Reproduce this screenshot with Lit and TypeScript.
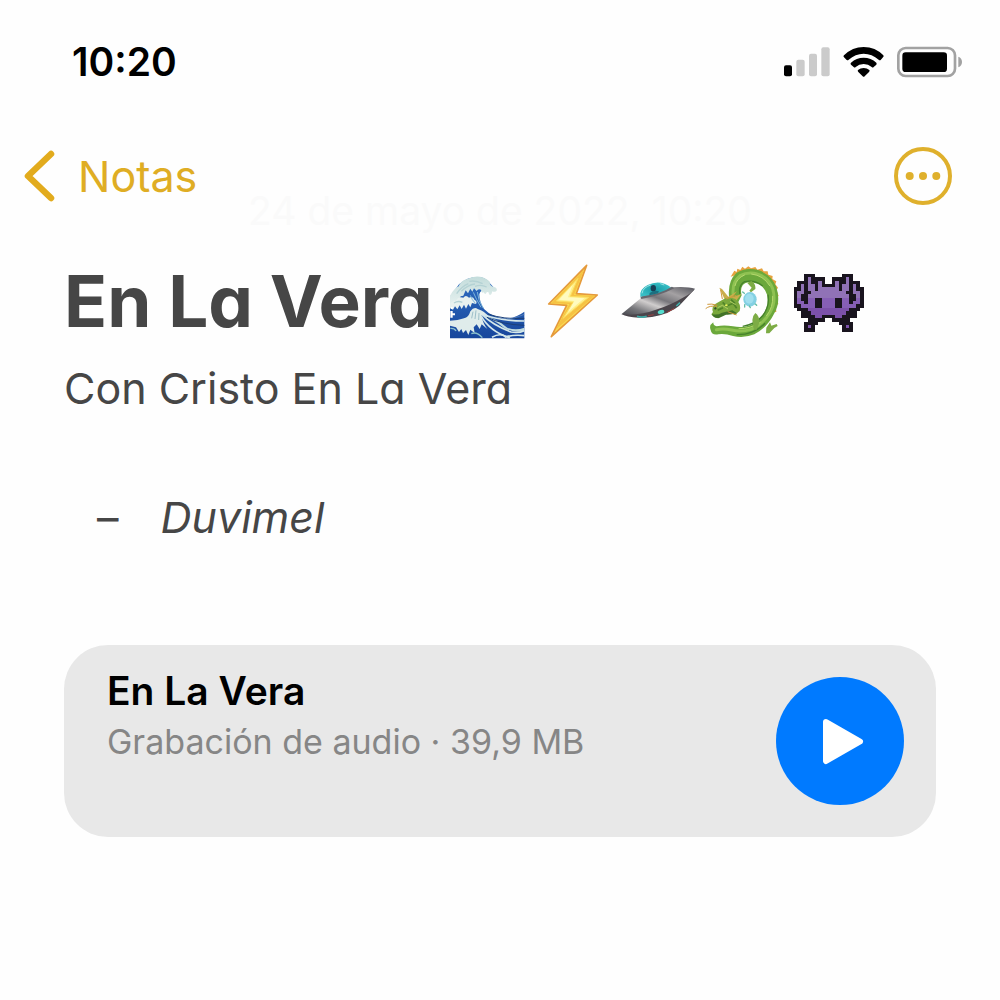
import { LitElement, html, svg, css } from "lit";
import { customElement } from "lit/decorators.js";

// Left half of the alien sprite; the right half mirrors it. k = outline, p = body, . = empty
const ALIEN_ROWS = [
  "...kkk....",
  "...kpkkkk.",
  ".kkkpkkpk.",
  ".kpkppkpkk",
  "kkpkppkppp",
  "kppkkppppp",
  "kpkkpppppp",
  "kpkkppkkpp",
  "kppkppkkpp",
  "kkppppkkpp",
  ".kkkpppppp",
  "..kkkppppp",
  "..kkkkppkk",
  "....kkkkk.",
  "...kkkk...",
  "...kpk....",
  "...kkk....",
];

@customElement("note-emoji")
class NoteEmoji extends LitElement {
  static properties = { kind: {} };
  declare kind: string;

  static styles = css`
    :host { display: block; flex: none; }
    svg { display: block; width: 76px; height: 80px; overflow: visible; }
  `;

  private wave() {
    return svg`
      <defs>
        <linearGradient id="sea" x1="0" y1="0" x2="0" y2="1">
          <stop offset="0" stop-color="#2f6ec2"/><stop offset="1" stop-color="#17469c"/>
        </linearGradient>
        <linearGradient id="foam" x1="0" y1="0" x2="0" y2="1">
          <stop offset="0" stop-color="#c3dcdb"/><stop offset="1" stop-color="#e6f1ef"/>
        </linearGradient>
      </defs>
      <path fill="url(#sea)" d="M33 125 L60 88 Q85 66 115 66 Q138 66 150 82 L165 98 L148 104 Q124 102 121 118 Q121 143 136 163 Q158 185 190 190 Q225 193 256 170 V250 H33Z"/>
      <path fill="url(#foam)" d="M33 122 Q46 99 59 94 Q66 77 82 73 Q103 62 123 65 Q143 69 153 81 Q150 92 165 96 Q176 99 173 107 Q166 113 160 109 Q157 124 150 118 Q150 108 143 112 Q139 122 134 112 Q127 116 126 104 Q117 100 113 108 L105 100 L100 110 L94 101 L87 115 L80 106 L73 122 L65 124 Q60 137 50 137 L33 151Z"/>
      <path fill="#e8f1ef" d="M33 148 Q40 136 52 135 Q58 123 73 128 Q80 118 90 128 Q102 122 107 135 Q116 140 111 147 L99 144 L94 157 L88 147 L81 161 L75 149 L68 162 L62 151 L55 163 L48 154 L42 164 L33 160Z"/>
      <path fill="none" stroke="#b4d2d4" stroke-width="4" d="M53 116 Q67 95 88 86 M67 109 Q85 90 108 87 M91 79 Q110 75 131 86 M108 94 Q126 87 143 96 M45 144 Q57 136 70 142"/>
      <path fill="none" stroke="#7eb7dc" stroke-width="3" d="M103 112 Q112 134 126 157 M115 111 Q117 137 133 160 M94 121 Q99 135 109 145"/>
      <path fill="#fff" d="M34 168 h7 v7 h7 v6 h-7 v7 h-7Z M36 156 h5 v6 h-5Z"/>
      <path fill="#dfeceb" d="M33 197 Q57 197 75 190 Q89 188 94 169 Q105 154 116 162 Q140 169 153 190 Q139 182 127 180 Q131 204 145 222 L128 208 L122 222 L113 208 L104 217 L107 234 L94 224 L88 240 L81 225 L72 234 L67 222 L60 231 L51 217 L33 212Z"/>
      <path fill="#bfdbe0" d="M128 180 Q171 189 205 218 Q230 228 256 218 V227 Q221 235 194 218 Q165 194 128 180Z"/>
      <g fill="none" stroke="#d5e8ea" stroke-width="5">
        <path d="M135 179 Q187 198 256 198"/><path d="M126 182 Q151 229 213 249"/>
        <path d="M130 179 Q159 209 216 231 Q239 235 256 227"/><path d="M159 247 Q184 232 202 246"/>
        <path d="M197 247 Q224 238 256 242"/>
      </g>
      <g fill="none" stroke="#1a3f78" stroke-width="3">
        <path d="M147 177 Q194 194 256 190"/><path d="M144 187 Q191 209 256 211"/>
      </g>
      <path fill="none" stroke="#9dbfc9" stroke-width="3" d="M102 170 L98 190 M111 166 L108 192 M120 174 L119 195"/>
      <path fill="none" stroke="#8cc1cc" stroke-width="4" d="M97 236 Q113 229 130 248 M34 220 Q47 219 51 228"/>
      <path fill="none" stroke="#6d8fbe" stroke-width="2" d="M204 191 Q225 191 256 178"/>`;
  }

  private bolt() {
    return svg`
      <path fill="#fadb50" stroke="#e59a3c" stroke-width="5" stroke-linejoin="round" d="M173 31 L59 147 L113 151 L67 245 L205 120 L142 116Z"/>
      <path fill="#f6c243" d="M165 44 L68 144 L121 147 L80 224 L196 123 L135 120Z"/>
      <path fill="#fff08a" stroke="#fbdc5d" stroke-width="3" d="M147 70 L82 138 L132 142 L102 190 L179 127 L124 124Z"/>
      <path fill="#fffbc0" d="M131 90 L90 134 L136 138 L117 171 L166 130 L117 127Z"/>`;
  }

  private saucer() {
    return svg`
      <defs>
        <linearGradient id="hull" x1="0" y1="1" x2="1" y2="0">
          <stop offset="0" stop-color="#46474e"/><stop offset=".2" stop-color="#77777b"/><stop offset=".4" stop-color="#d0cdcd"/>
          <stop offset=".55" stop-color="#77767b"/><stop offset=".73" stop-color="#a4a1a3"/><stop offset="1" stop-color="#515159"/>
        </linearGradient>
        <radialGradient id="dome"><stop offset="0" stop-color="#179aa6"/><stop offset="1" stop-color="#37bec5"/></radialGradient>
      </defs>
      <path fill="#4b454b" d="M33 178 Q46 187 84 188 Q119 190 147 181 Q196 167 218 138 L249 105 L93 151Z"/>
      <path fill="url(#hull)" d="M31 178 L91 128 Q102 112 184 97 Q230 94 252 101 Q248 110 218 127 Q184 148 139 163 Q83 184 31 178Z"/>
      <path fill="#66676e" d="M88 125 Q131 111 183 95 L190 100 Q145 123 91 132Z"/>
      <path fill="url(#dome)" d="M88 125 Q84 103 110 90 Q136 77 160 86 Q174 91 179 97 Q154 116 88 125Z"/>
      <path fill="none" stroke="#9ae3e4" stroke-width="3" d="M93 115 Q96 97 119 90 M148 86 L160 90"/>
      <ellipse fill="#183f55" cx="127" cy="100" rx="8" ry="10"/>
      <path fill="#1b6f80" d="M116 114 Q130 104 144 109 L141 115 L115 121Z"/>
      <ellipse fill="#55dccd" cx="150" cy="171" rx="10" ry="6" transform="rotate(-15 150 171)"/>
      <path fill="none" stroke="#40aaa6" stroke-width="5" d="M78 184 Q92 189 107 184 M196 153 L207 143"/>
      <path fill="none" stroke="#9d403e" stroke-width="3" d="M111 182 L128 179 M167 173 L190 160"/>`;
  }

  private dragon() {
    return svg`
      <path fill="#e6a23e" d="M101 65 L112 47 L119 51 L121 41 L130 45 L136 35 L144 41 L154 34 L162 40 L175 36 L181 44 L195 40 L200 49 L212 49 L214 59 L227 63 L226 72 L238 79 L235 88 L243 98 L238 106 L245 122 L239 130 L244 147 L236 152 L238 171 L228 172 L218 100 L199 61 L151 49Z"/>
      <path fill="#6ba83b" d="M96 124 Q92 78 118 54 Q148 35 186 46 Q225 61 238 96 Q252 141 232 175 Q211 218 172 238 Q140 251 108 243 Q83 235 64 238 Q44 242 41 225 Q35 211 49 202 Q48 212 59 214 Q80 209 108 214 Q145 222 172 203 Q203 181 211 151 Q215 122 205 107 Q194 88 173 84 Q147 78 137 91 Q129 103 134 121 L124 141 L98 141Z"/>
      <path fill="none" stroke="#8fc252" stroke-width="9" stroke-linecap="round" d="M108 116 Q106 80 129 62 Q155 49 184 58 Q214 68 227 101 Q238 139 220 171 Q199 207 162 223 Q133 232 104 225 Q79 219 58 224"/>
      <path fill="none" stroke="#b4d76c" stroke-width="3" stroke-linecap="round" d="M114 92 Q119 70 142 60 M164 57 Q199 61 218 92 M227 124 Q229 157 209 182 M190 202 Q160 222 126 221"/>
      <path fill="none" stroke="#46822c" stroke-width="4" d="M129 118 Q123 92 143 80 Q174 74 197 93 M213 119 Q219 154 196 184 Q172 209 137 214 M204 205 Q170 240 119 239"/>
      <path fill="#c9ad4a" d="M82 131 L67 98 L75 102 L94 125 L120 109 L106 127 L133 117 L117 138Z"/>
      <path fill="#7aa83c" d="M48 171 Q42 156 56 146 L74 136 Q93 121 115 132 Q134 147 128 168 L114 180 Q102 171 91 176 L69 183 L65 190 Q51 189 43 178Z"/>
      <path fill="#427329" d="M45 177 Q60 182 75 173 L106 166 L120 175 Q101 180 87 179 L66 189 Q49 191 45 177Z"/>
      <path fill="none" stroke="#cf993d" stroke-width="3" d="M76 132 L71 105 M87 132 L118 121 M61 151 Q43 145 31 148 M60 154 Q37 151 26 161 M92 170 L119 180"/>
      <path fill="none" stroke="#4f8429" stroke-width="5" d="M77 142 L88 153 L109 145 L119 160 M62 166 L78 158 M102 134 L114 145"/>
      <path fill="none" stroke="#aecb62" stroke-width="3" d="M62 158 L76 151 L93 162 M99 139 L116 149"/>
      <path fill="#7dac45" d="M163 78 Q177 86 175 102 L162 112 L157 107 L164 98 L151 84Z M175 174 Q187 181 187 203 L179 224 Q167 226 169 209 Q161 188 175 174Z M208 218 L219 202 L223 212 L239 207 L242 213 L232 219 L217 235 L207 235Z"/>
      <ellipse fill="#83d0e3" cx="159" cy="133" rx="20" ry="22"/>
      <ellipse fill="#a0dfee" cx="157" cy="131" rx="13" ry="15"/>
      <path fill="none" stroke="#65bda3" stroke-width="4" stroke-linecap="round" d="M142 115 L137 111 M143 149 L143 156 M157 153 L160 158 M175 147 L179 151"/>
      <ellipse fill="#e5f25c" cx="88" cy="151" rx="4" ry="3"/>
      <path fill="#344e27" d="M51 160 l5 -4 l3 5 l-5 3Z"/>`;
  }

  private alien() {
    const w = 10.45, h = 10.25;
    return svg`
      <g shape-rendering="crispEdges">
      ${ALIEN_ROWS.map((half, r) =>
        [...half, ...[...half].reverse()].map((cell, c) => cell === "." ? null : svg`
          <rect x=${29 + c * w} y=${56 + r * h} width=${w + 0.6} height=${h + 0.6}
            fill=${cell === "k" ? "#19141e" : r < 7 ? "#9072b6" : r < 10 ? "#865fb5" : "#7c51aa"}/>`)
      )}</g>`;
  }

  render() {
    const art: Record<string, [string, string, unknown]> = {
      wave: ["🌊", "30 21 228 240", this.wave()],
      bolt: ["⚡", "18 21 228 240", this.bolt()],
      saucer: ["🛸", "30 21 228 240", this.saucer()],
      dragon: ["🐉", "30 21 228 240", this.dragon()],
      alien: ["👾", "27 21 228 240", this.alien()],
    };
    const [label, box, shapes] = art[this.kind];
    return html`<svg role="img" aria-label=${label} viewBox=${box}>${shapes}</svg>`;
  }
}

@customElement("app-root")
class AppRoot extends LitElement {
  static styles = css`
    :host {
      display: block;
      min-height: 100vh;
      background: #fefefe;
      color: #464646;
      font-family: Inter, "Liberation Sans", sans-serif;
    }
    svg { display: block; flex: none; }
    h1, h2, p, ul { margin: 0; padding: 0; font-weight: 400; }
    .status {
      display: flex;
      justify-content: space-between;
      align-items: center;
      padding: 36px 38px 0 72px;
      color: #000;
    }
    .clock { font-size: 39px; line-height: 52px; font-weight: 600; }
    .indicators { display: flex; align-items: center; gap: 13px; }
    .signal { width: 46px; height: 30px; }
    .wifi { width: 41px; height: 30px; }
    .battery { width: 65px; height: 32px; }
    .nav {
      display: flex;
      justify-content: space-between;
      align-items: center;
      padding: 59px 48px 0 24px;
    }
    .back {
      display: flex;
      align-items: center;
      gap: 23px;
      color: #dfad24;
      font-size: 43px;
      line-height: 58px;
      text-decoration: none;
    }
    .chevron { width: 31px; height: 52px; }
    .more { padding: 0; border: 0; background: none; border-radius: 50%; }
    .ring { width: 58px; height: 58px; }
    .date {
      margin-top: -14px;
      text-align: center;
      color: #fafafa;
      font-size: 39px;
      line-height: 40px;
    }
    .note { padding: 31px 64px 0; font-feature-settings: "cv11"; }
    .title { display: flex; align-items: flex-start; gap: 16px; }
    .title-text { font-size: 71px; line-height: 78px; font-weight: 700; white-space: nowrap; }
    .emojis { display: flex; gap: 10px; }
    .body { padding-top: 16px; font-size: 43px; line-height: 60px; }
    .list { padding: 69px 0 0 33px; list-style: none; font-size: 43px; line-height: 60px; }
    .item { display: flex; gap: 42px; }
    .card {
      display: flex;
      justify-content: space-between;
      align-items: flex-start;
      margin: 98px 64px 0;
      padding: 32px 32px 32px 43px;
      border-radius: 44px;
      background: #e8e8e8;
    }
    .name { font-size: 39px; line-height: 28px; font-weight: 600; color: #000; }
    .meta { padding-top: 24px; font-size: 34px; line-height: 26px; color: #868686; }
    .play {
      display: grid;
      place-items: center;
      flex: none;
      width: 128px;
      height: 128px;
      padding: 0;
      border: 0;
      border-radius: 50%;
      background: #007aff;
    }
    .triangle { width: 128px; height: 128px; }
  `;

  render() {
    return html`
      <header>
        <div class="status">
          <time class="clock">10:20</time>
          <div class="indicators">
            <svg class="signal" viewBox="42 49 138 90" aria-hidden="true">
              <rect x="42" y="104" width="24" height="33" rx="6"/>
              <g fill="#cbcbcb">
                <rect x="79" y="87" width="25" height="50" rx="6"/>
                <rect x="117" y="69" width="24" height="68" rx="6"/>
                <rect x="154" y="50" width="25" height="87" rx="6"/>
              </g>
            </svg>
            <svg class="wifi" viewBox="218 47 123 90" aria-hidden="true">
              <path d="M280 47 Q315 47 339 72 Q341 75 338 78 L331 86 Q328 88 325 85 Q305 67 280 67 Q255 67 235 85 Q232 88 229 86 L221 78 Q218 75 221 72 Q246 47 280 47Z"/>
              <path d="M280 79 Q302 79 318 94 Q320 97 318 100 L310 107 Q307 110 304 107 Q294 98 280 98 Q266 98 256 107 Q253 110 250 107 L242 100 Q239 97 242 94 Q258 79 280 79Z"/>
              <path d="M280 110 Q290 110 297 116 Q299 119 296 122 L283 135 Q280 138 277 135 L264 122 Q261 119 263 116 Q270 110 280 110Z"/>
            </svg>
            <svg class="battery" viewBox="381 46 195 96" aria-hidden="true">
              <rect x="385" y="52" width="170" height="84" rx="22" fill="none" stroke="#a2a2a2" stroke-width="8"/>
              <rect x="397" y="65" width="134" height="59" rx="10"/>
              <path fill="#a2a2a2" d="M565 78 Q576 82 576 94 Q576 106 565 110Z"/>
            </svg>
          </div>
        </div>
        <nav class="nav">
          <a class="back" href="#notas">
            <svg class="chevron" viewBox="0 0 31 52" fill="none" stroke="#e2ab1d" stroke-width="6.5" stroke-linecap="round" stroke-linejoin="round" aria-hidden="true"><path d="M27 4 L4 26 L27 48"/></svg>
            Notas
          </a>
          <button class="more" aria-label="Más opciones">
            <svg class="ring" viewBox="0 0 58 58" fill="#dfb02c" aria-hidden="true">
              <circle cx="29" cy="29" r="27" fill="none" stroke="#dfb02c" stroke-width="4"/>
              <circle cx="15.7" cy="29" r="4"/><circle cx="29" cy="29" r="4"/><circle cx="42.3" cy="29" r="4"/>
            </svg>
          </button>
        </nav>
      </header>
      <main>
        <p class="date">24 de mayo de 2022, 10:20</p>
        <article class="note">
          <h1 class="title">
            <span class="title-text">En La Vera</span>
            <span class="emojis">
              ${["wave", "bolt", "saucer", "dragon", "alien"].map((k) => html`<note-emoji .kind=${k}></note-emoji>`)}
            </span>
          </h1>
          <p class="body">Con Cristo En La Vera</p>
          <ul class="list">
            <li class="item"><span>–</span><em>Duvimel</em></li>
          </ul>
        </article>
        <section class="card">
          <div>
            <h2 class="name">En La Vera</h2>
            <p class="meta">Grabación de audio · 39,9 MB</p>
          </div>
          <button class="play" aria-label="Reproducir">
            <svg class="triangle" viewBox="0 0 128 128" aria-hidden="true">
              <path fill="#fff" stroke="#fff" stroke-width="6" stroke-linejoin="round" d="M50 45 L84 64.500 L50 84Z"/>
            </svg>
          </button>
        </section>
      </main>
    `;
  }
}
